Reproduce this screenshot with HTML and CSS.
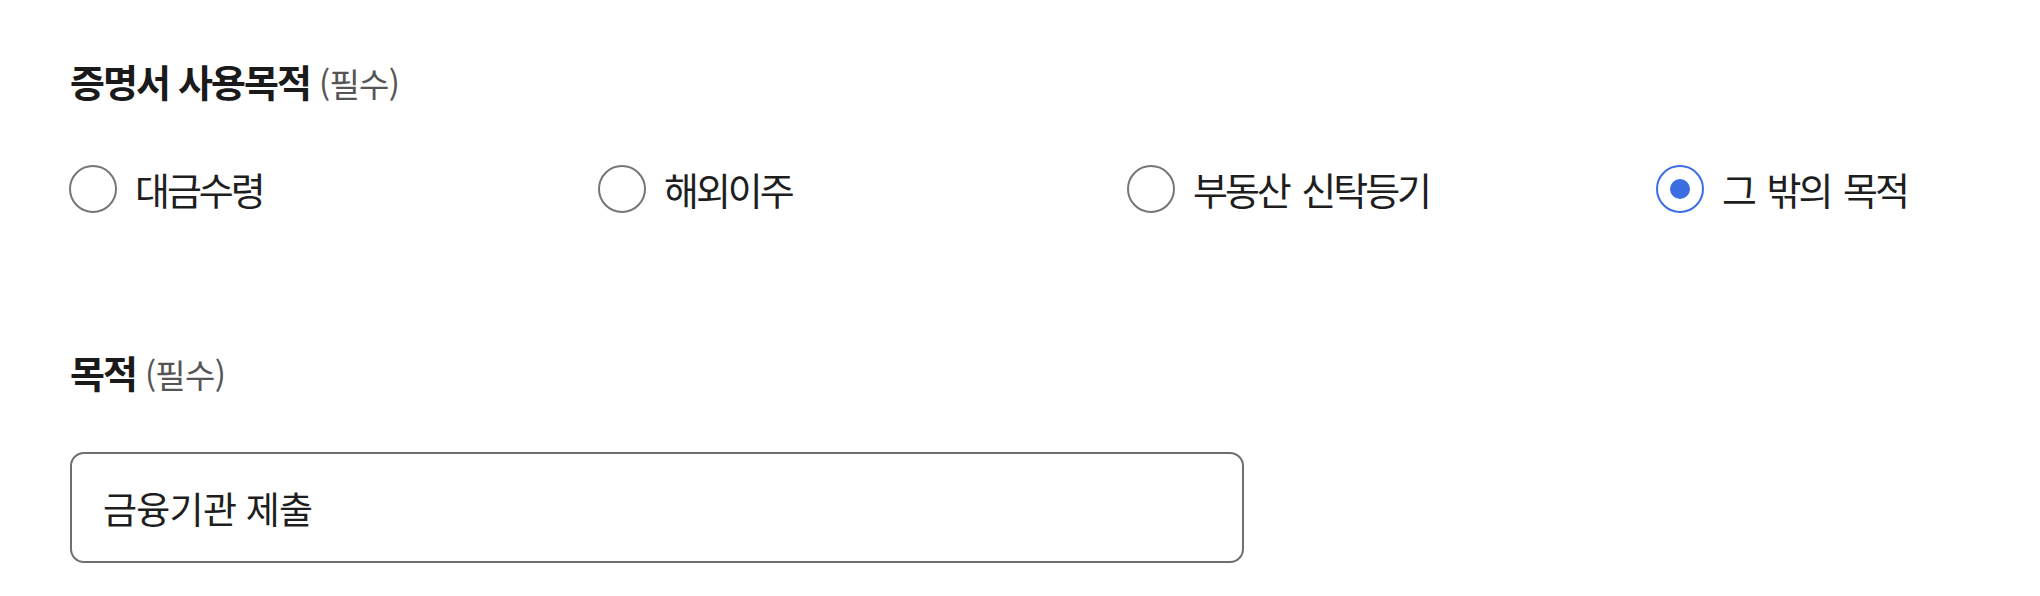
FILE: index.html
```html
<!DOCTYPE html>
<html lang="ko">
<head>
<meta charset="utf-8">
<title>증명서 사용목적</title>
<link rel="stylesheet" href="styles.css">
</head>
<body>
<main class="form">
  <section class="field">
    <h2 class="label">증명서 사용목적 <span class="req">(필수)</span></h2>
    <div class="radios">
      <label class="radio"><span class="dot"></span><span class="radio-text">대금수령</span></label>
      <label class="radio"><span class="dot"></span><span class="radio-text">해외이주</span></label>
      <label class="radio"><span class="dot"></span><span class="radio-text">부동산 신탁등기</span></label>
      <label class="radio checked"><span class="dot"></span><span class="radio-text">그 밖의 목적</span></label>
    </div>
  </section>
  <section class="field field-2">
    <h2 class="label">목적 <span class="req">(필수)</span></h2>
    <div class="input">금융기관 제출</div>
  </section>
</main>
</body>
</html>
```

FILE: styles.css
```css
* { box-sizing: border-box; }
html, body { margin: 0; background: #ffffff; }
body {
  font-family: "Noto Sans CJK KR", "Noto Sans", sans-serif;
  color: #1e1e1e;
}
.form {
  padding: 57px 0 0 70px;
}
.label {
  margin: 0;
  font-size: 38px;
  line-height: 48px;
  font-weight: 700;
  letter-spacing: -0.05em;
  color: #1a1a1a;
}
.req {
  font-size: 33px;
  font-weight: 400;
  color: #555555;
  letter-spacing: -0.02em;
}
.radios {
  margin-top: 58px;
  display: grid;
  grid-template-columns: 529px 529px 529px auto;
  margin-left: -1px;
}
.radio {
  display: flex;
  align-items: center;
  gap: 18px;
  height: 48px;
}
.dot {
  width: 48px;
  height: 48px;
  border-radius: 50%;
  border: 2px solid #767676;
  display: flex;
  align-items: center;
  justify-content: center;
  flex: none;
}
.checked .dot { border-color: #3b6ee3; }
.checked .dot::after {
  content: "";
  width: 20px;
  height: 20px;
  border-radius: 50%;
  background: #3b6ee3;
}
.radio-text {
  font-size: 38px;
  line-height: 48px;
  letter-spacing: -0.08em;
  word-spacing: 5px;
  color: #1e1e1e;
}
.field-2 { margin-top: 135px; }
.input {
  margin-top: 54px;
  width: 1174px;
  height: 111px;
  border: 2px solid #6f6f6f;
  border-radius: 14px;
  display: flex;
  align-items: center;
  padding-left: 31px;
  font-size: 37px;
  letter-spacing: -0.02em;
  color: #1e1e1e;
}
```
